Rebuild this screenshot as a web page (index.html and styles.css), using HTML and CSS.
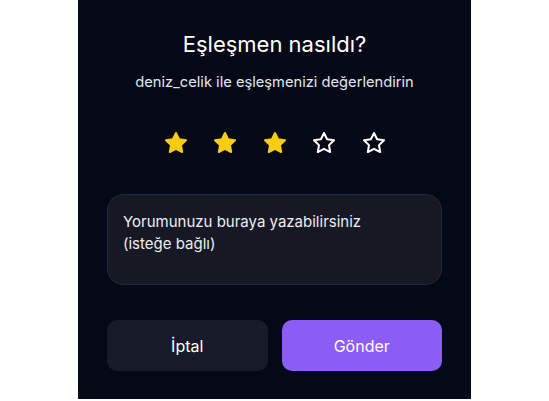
FILE: index.html
```html
<!DOCTYPE html>
<html lang="tr">
<head>
<meta charset="utf-8">
<link rel="stylesheet" href="styles.css">
</head>
<body>
<div class="panel">
  <h1 class="title">Eşleşmen nasıldı?</h1>
  <p class="subtitle">deniz_celik ile eşleşmenizi değerlendirin</p>
  <div class="stars">
    <svg class="star filled" viewBox="0 0 24 24"><polygon points="12 2 15.09 8.26 22 9.27 17 14.14 18.18 21.02 12 17.77 5.82 21.02 7 14.14 2 9.27 8.91 8.26 12 2"/></svg>
    <svg class="star filled" viewBox="0 0 24 24"><polygon points="12 2 15.09 8.26 22 9.27 17 14.14 18.18 21.02 12 17.77 5.82 21.02 7 14.14 2 9.27 8.91 8.26 12 2"/></svg>
    <svg class="star filled" viewBox="0 0 24 24"><polygon points="12 2 15.09 8.26 22 9.27 17 14.14 18.18 21.02 12 17.77 5.82 21.02 7 14.14 2 9.27 8.91 8.26 12 2"/></svg>
    <svg class="star empty" viewBox="0 0 24 24"><polygon points="12 2 15.09 8.26 22 9.27 17 14.14 18.18 21.02 12 17.77 5.82 21.02 7 14.14 2 9.27 8.91 8.26 12 2"/></svg>
    <svg class="star empty" viewBox="0 0 24 24"><polygon points="12 2 15.09 8.26 22 9.27 17 14.14 18.18 21.02 12 17.77 5.82 21.02 7 14.14 2 9.27 8.91 8.26 12 2"/></svg>
  </div>
  <div class="comment">Yorumunuzu buraya yazabilirsiniz<br>(isteğe bağlı)</div>
  <div class="actions">
    <button class="btn cancel">İptal</button>
    <button class="btn send">Gönder</button>
  </div>
</div>
</body>
</html>
```
FILE: styles.css
```css
html, body {
  margin: 0;
  padding: 0;
  background: #ffffff;
}
body {
  font-family: Inter, "Noto Sans", sans-serif;
}
.panel {
  width: 393px;
  height: 399px;
  margin: 0 auto;
  box-sizing: border-box;
  background: #050816;
  padding: 30px 29px 0;
  display: flex;
  flex-direction: column;
  align-items: center;
}
.title {
  margin: 0;
  font-size: 22px;
  line-height: 28px;
  font-weight: 400;
  color: #ffffff;
}
.subtitle {
  margin: 14px 0 0;
  font-size: 14.7px;
  line-height: 20px;
  color: #e4e6ee;
}
.stars {
  margin-top: 39px;
  display: flex;
  gap: 25.5px;
}
.star {
  width: 24px;
  height: 24px;
  stroke-width: 2;
  stroke-linejoin: round;
  stroke-linecap: round;
}
.star.filled {
  fill: #facc15;
  stroke: #facc15;
}
.star.empty {
  fill: none;
  stroke: #ffffff;
}
.comment {
  margin-top: 39px;
  align-self: stretch;
  height: 91px;
  box-sizing: border-box;
  background: #161824;
  border: 1px solid #24273a;
  border-radius: 16px;
  padding: 16px 15px;
  font-size: 15px;
  line-height: 22px;
  color: #eceef4;
}
.actions {
  margin-top: 35px;
  align-self: stretch;
  display: flex;
  gap: 14px;
}
.btn {
  flex: 1;
  height: 51px;
  border: none;
  border-radius: 10px;
  font-family: inherit;
  font-size: 16px;
  color: #ffffff;
}
.cancel {
  background: #171a28;
}
.send {
  background: #8b5cf6;
}
```
